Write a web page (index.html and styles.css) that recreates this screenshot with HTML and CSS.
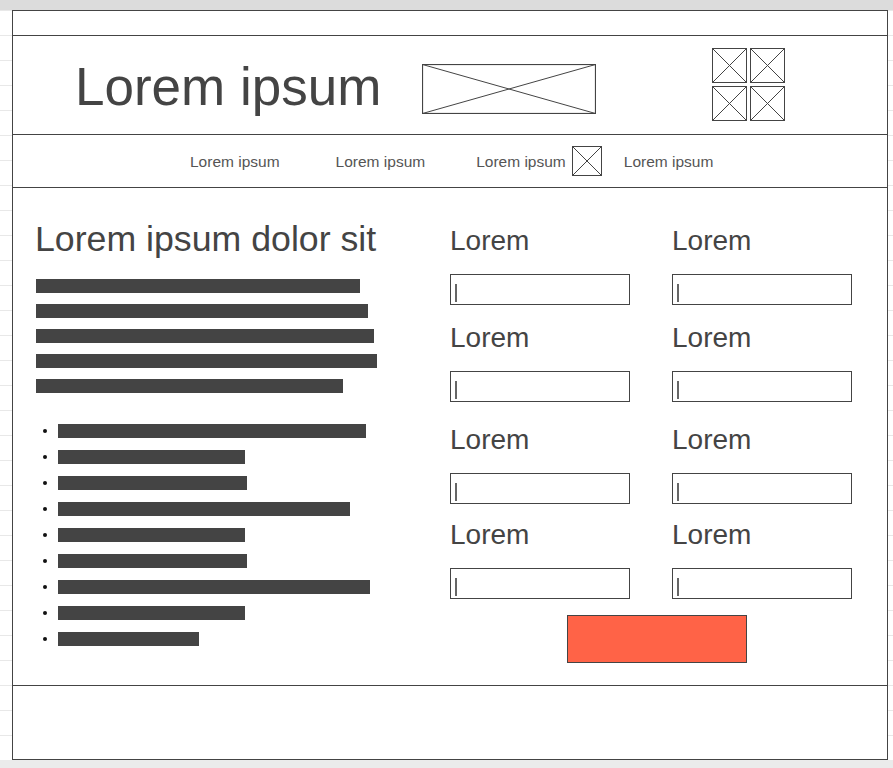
FILE: index.html
```html
<!DOCTYPE html>
<html lang="en">
<head>
<meta charset="utf-8">
<title>Wireframe</title>
<link rel="stylesheet" href="styles.css">
</head>
<body>
<div class="top-strip"></div>
<div class="canvas">
  <div class="frame">
    <div class="topbar"></div>
    <header class="header">
      <h1 class="brand">Lorem ipsum</h1>
      <svg class="banner" width="174" height="50" viewBox="0 0 174 50">
        <rect x="0.5" y="0.5" width="173" height="49" fill="none" stroke="#444" stroke-width="1.2"/>
        <line x1="0.5" y1="0.5" x2="173.5" y2="49.5" stroke="#444" stroke-width="1"/>
        <line x1="0.5" y1="49.5" x2="173.5" y2="0.5" stroke="#444" stroke-width="1"/>
      </svg>
      <div class="icon-grid">
        <svg class="ph" width="35" height="35" viewBox="0 0 35 35"><rect x="0.5" y="0.5" width="34" height="34" fill="none" stroke="#444"/><line x1="0.5" y1="0.5" x2="34.5" y2="34.5" stroke="#444"/><line x1="0.5" y1="34.5" x2="34.5" y2="0.5" stroke="#444"/></svg>
        <svg class="ph" width="35" height="35" viewBox="0 0 35 35"><rect x="0.5" y="0.5" width="34" height="34" fill="none" stroke="#444"/><line x1="0.5" y1="0.5" x2="34.5" y2="34.5" stroke="#444"/><line x1="0.5" y1="34.5" x2="34.5" y2="0.5" stroke="#444"/></svg>
        <svg class="ph" width="35" height="35" viewBox="0 0 35 35"><rect x="0.5" y="0.5" width="34" height="34" fill="none" stroke="#444"/><line x1="0.5" y1="0.5" x2="34.5" y2="34.5" stroke="#444"/><line x1="0.5" y1="34.5" x2="34.5" y2="0.5" stroke="#444"/></svg>
        <svg class="ph" width="35" height="35" viewBox="0 0 35 35"><rect x="0.5" y="0.5" width="34" height="34" fill="none" stroke="#444"/><line x1="0.5" y1="0.5" x2="34.5" y2="34.5" stroke="#444"/><line x1="0.5" y1="34.5" x2="34.5" y2="0.5" stroke="#444"/></svg>
      </div>
    </header>
    <nav class="nav">
      <span class="nav-item n1">Lorem ipsum</span>
      <span class="nav-item n2">Lorem ipsum</span>
      <span class="nav-item n3">Lorem ipsum</span>
      <svg class="nav-icon" width="30" height="30" viewBox="0 0 30 30"><rect x="0.5" y="0.5" width="29" height="29" fill="none" stroke="#444"/><line x1="0.5" y1="0.5" x2="29.5" y2="29.5" stroke="#444"/><line x1="0.5" y1="29.5" x2="29.5" y2="0.5" stroke="#444"/></svg>
      <span class="nav-item n4">Lorem ipsum</span>
    </nav>
    <main class="main">
      <section class="content">
        <h2 class="heading">Lorem ipsum dolor sit</h2>
        <div class="para">
          <div class="bar" style="width:324px"></div>
          <div class="bar" style="width:332px"></div>
          <div class="bar" style="width:338px"></div>
          <div class="bar" style="width:341px"></div>
          <div class="bar" style="width:307px"></div>
        </div>
        <ul class="list">
          <li class="item"><span class="bar" style="width:308px"></span></li>
          <li class="item"><span class="bar" style="width:187px"></span></li>
          <li class="item"><span class="bar" style="width:189px"></span></li>
          <li class="item"><span class="bar" style="width:292px"></span></li>
          <li class="item"><span class="bar" style="width:187px"></span></li>
          <li class="item"><span class="bar" style="width:189px"></span></li>
          <li class="item"><span class="bar" style="width:312px"></span></li>
          <li class="item"><span class="bar" style="width:187px"></span></li>
          <li class="item"><span class="bar" style="width:141px"></span></li>
        </ul>
      </section>
      <form class="form">
        <div class="row r1">
          <div class="field"><label class="label">Lorem</label><div class="input"><span class="caret"></span></div></div>
          <div class="field"><label class="label">Lorem</label><div class="input"><span class="caret"></span></div></div>
        </div>
        <div class="row r2">
          <div class="field"><label class="label">Lorem</label><div class="input"><span class="caret"></span></div></div>
          <div class="field"><label class="label">Lorem</label><div class="input"><span class="caret"></span></div></div>
        </div>
        <div class="row r3">
          <div class="field"><label class="label">Lorem</label><div class="input"><span class="caret"></span></div></div>
          <div class="field"><label class="label">Lorem</label><div class="input"><span class="caret"></span></div></div>
        </div>
        <div class="row r4">
          <div class="field"><label class="label">Lorem</label><div class="input"><span class="caret"></span></div></div>
          <div class="field"><label class="label">Lorem</label><div class="input"><span class="caret"></span></div></div>
        </div>
        <div class="button"></div>
      </form>
    </main>
    <footer class="footer"></footer>
  </div>
</div>
<div class="bottom-strip"></div>
</body>
</html>
```
FILE: styles.css
```css
* { box-sizing: border-box; }
html, body { margin: 0; padding: 0; }
body {
  background: #fff;
  font-family: "Liberation Sans", Arial, sans-serif;
  color: #444;
  overflow: hidden;
}
.top-strip { height: 10px; background: #dcdcdc; }
.bottom-strip { height: 8px; background: #ebebeb; }
.canvas {
  padding: 0 5px 0 12px;
  background-image: repeating-linear-gradient(to bottom, #e8e8e8 0, #e8e8e8 1px, transparent 1px, transparent 25px);
}
.frame {
  height: 750px;
  border: 1px solid #444;
  background: #fff;
  display: flex;
  flex-direction: column;
}
.topbar { height: 25px; border-bottom: 1px solid #444; flex: none; }
.header {
  height: 99px;
  flex: none;
  border-bottom: 1px solid #444;
  display: flex;
  align-items: flex-start;
  padding-left: 62px;
}
.brand {
  margin: 21px 0 0 0;
  font-size: 53px;
  line-height: 60px;
  font-weight: normal;
  color: #444;
  white-space: nowrap;
}
.banner { display: block; margin: 28px 0 0 41px; flex: none; }
.icon-grid {
  margin: 12px 0 0 116px;
  display: grid;
  grid-template-columns: 35px 35px;
  grid-auto-rows: 35px;
  gap: 3px;
}
.ph { display: block; }
.nav {
  height: 53px;
  flex: none;
  border-bottom: 1px solid #444;
  display: flex;
  align-items: center;
  padding-left: 177px;
  font-size: 15.5px;
  color: #555;
}
.nav-item { white-space: nowrap; padding-top: 2px; }
.n1 { margin-right: 56px; }
.n2 { margin-right: 51px; }
.n3 { margin-right: 6px; }
.nav-icon { display: block; margin-right: 22px; }
.main {
  height: 498px;
  flex: none;
  border-bottom: 1px solid #444;
  display: flex;
  padding-left: 23px;
}
.content { width: 414px; flex: none; padding-top: 31px; }
.heading {
  margin: 0 0 20px -1px;
  font-size: 35.7px;
  line-height: 40px;
  font-weight: normal;
  color: #444;
  white-space: nowrap;
}
.para { display: flex; flex-direction: column; gap: 11px; }
.bar { display: block; height: 14px; background: #444; }
.list {
  list-style: none;
  margin: 31px 0 0 0;
  padding: 0 0 0 7px;
  display: flex;
  flex-direction: column;
  gap: 12px;
}
.item { display: flex; align-items: center; }
.item::before {
  content: "";
  width: 4px;
  height: 4px;
  border-radius: 50%;
  background: #111;
  margin-right: 11px;
  flex: none;
}
.form { padding-top: 39px; width: 402px; }
.row {
  display: grid;
  grid-template-columns: 180px 180px;
  column-gap: 42px;
}
.r2 { margin-top: 19px; }
.r3 { margin-top: 24px; }
.r4 { margin-top: 17px; }
.field { display: flex; flex-direction: column; }
.label {
  display: block;
  font-size: 28px;
  line-height: 30px;
  height: 30px;
  margin: -1px 0 18px 0;
  color: #444;
}
.input {
  height: 31px;
  border: 1px solid #444;
  background: #fff;
  padding: 9px 0 0 4px;
}
.caret { display: block; width: 2px; height: 18px; background: #666; }
.button {
  margin: 16px 0 0 117px;
  width: 180px;
  height: 48px;
  background: #ff6347;
  border: 1px solid #444;
}
.footer { flex: 1; }
```
